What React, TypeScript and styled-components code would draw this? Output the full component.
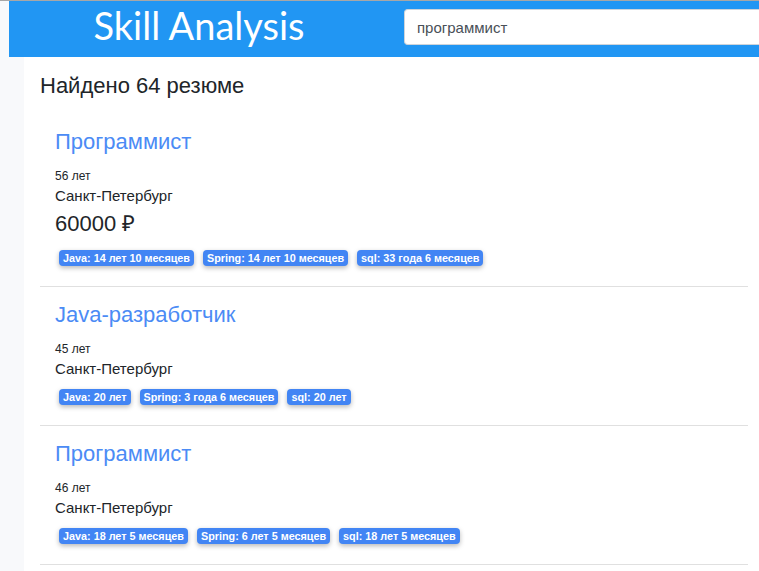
import styled, { createGlobalStyle } from 'styled-components';

const GlobalStyle = createGlobalStyle`
	html, body {
		margin: 0;
		padding: 0;
	}
	body {
		background: #f8f9fb;
		border-top: 1px solid #a7a7a7;
		font-family: "Liberation Sans", Arial, sans-serif;
		color: #212529;
		overflow-x: hidden;
	}
`;

type Skill = { name: string; period: string };
type Resume = {
	title: string;
	age: string;
	city: string;
	salary?: string;
	skills: Skill[];
};

const resumes: Resume[] = [
	{
		title: 'Программист',
		age: '56 лет',
		city: 'Санкт-Петербург',
		salary: '60000 ₽',
		skills: [
			{ name: 'Java', period: '14 лет 10 месяцев' },
			{ name: 'Spring', period: '14 лет 10 месяцев' },
			{ name: 'sql', period: '33 года 6 месяцев' },
		],
	},
	{
		title: 'Java-разработчик',
		age: '45 лет',
		city: 'Санкт-Петербург',
		skills: [
			{ name: 'Java', period: '20 лет' },
			{ name: 'Spring', period: '3 года 6 месяцев' },
			{ name: 'sql', period: '20 лет' },
		],
	},
	{
		title: 'Программист',
		age: '46 лет',
		city: 'Санкт-Петербург',
		skills: [
			{ name: 'Java', period: '18 лет 5 месяцев' },
			{ name: 'Spring', period: '6 лет 5 месяцев' },
			{ name: 'sql', period: '18 лет 5 месяцев' },
		],
	},
];

function App() {
	return (
		<>
			<GlobalStyle />
			<Header>
				<Brand>Skill Analysis</Brand>
				<SearchCell>
					<SearchInput defaultValue="программист" />
				</SearchCell>
			</Header>
			<Main>
				<Found>Найдено 64 резюме</Found>
				<List>
					{resumes.map((r, i) => (
						<Card key={i}>
							<CardTitle href="#">{r.title}</CardTitle>
							<Age>{r.age}</Age>
							<City>{r.city}</City>
							{r.salary && <Salary>{r.salary}</Salary>}
							<Badges>
								{r.skills.map((s) => (
									<Badge key={s.name}>
										{s.name}: {s.period}
									</Badge>
								))}
							</Badges>
						</Card>
					))}
				</List>
			</Main>
		</>
	);
}

const Header = styled.header`
	display: flex;
	align-items: flex-start;
	margin-left: 9px;
	height: 56px;
	background: #2196f3;
`;

const Brand = styled.h1`
	width: 380px;
	flex-shrink: 0;
	margin: 0;
	text-align: center;
	font-family: Lato, "Open Sans", sans-serif;
	font-weight: 400;
	font-size: 38px;
	line-height: 48px;
	color: #ffffff;
`;

const SearchCell = styled.div`
	flex: 1;
	padding: 8px 0 0 15px;
`;

const SearchInput = styled.input`
	box-sizing: border-box;
	width: 100%;
	height: 36px;
	padding: 0 12px;
	border: 1px solid #ced4da;
	border-right: none;
	border-radius: 4px 0 0 4px;
	background: #ffffff;
	font-family: "Liberation Sans", Arial, sans-serif;
	font-size: 15px;
	color: #495057;
	outline: none;
`;

const Main = styled.main`
	margin-left: 24px;
	min-height: 520px;
	padding: 16px 11px 0 16px;
	background: #ffffff;
`;

const Found = styled.h2`
	margin: 0 0 15px;
	font-weight: 400;
	font-size: 22px;
	line-height: 26px;
`;

const List = styled.div`
	display: flex;
	flex-direction: column;
`;

const Card = styled.article`
	display: flex;
	flex-direction: column;
	align-items: flex-start;
	padding: 15px 15px 20px;
	border-bottom: 1px solid #e0e0e0;
`;

const CardTitle = styled.a`
	margin-bottom: 12px;
	font-size: 22px;
	line-height: 26px;
	color: #4b8bf5;
	text-decoration: none;
`;

const Age = styled.div`
	font-size: 12px;
	line-height: 18px;
`;

const City = styled.div`
	font-size: 15px;
	line-height: 21px;
`;

const Salary = styled.div`
	margin-top: 2px;
	font-size: 22px;
	line-height: 32px;
`;

const Badges = styled.div`
	display: flex;
	gap: 9px;
	margin: 10px 0 0 4px;
`;

const Badge = styled.span`
	display: inline-block;
	padding: 2.6px 4px;
	border-radius: 4px;
	background: #4285f4;
	box-shadow: 0 2px 5px rgba(0, 0, 0, 0.28);
	font-size: 10.8px;
	font-weight: 700;
	line-height: 1;
	color: #ffffff;
	white-space: nowrap;
`;

export default App;
